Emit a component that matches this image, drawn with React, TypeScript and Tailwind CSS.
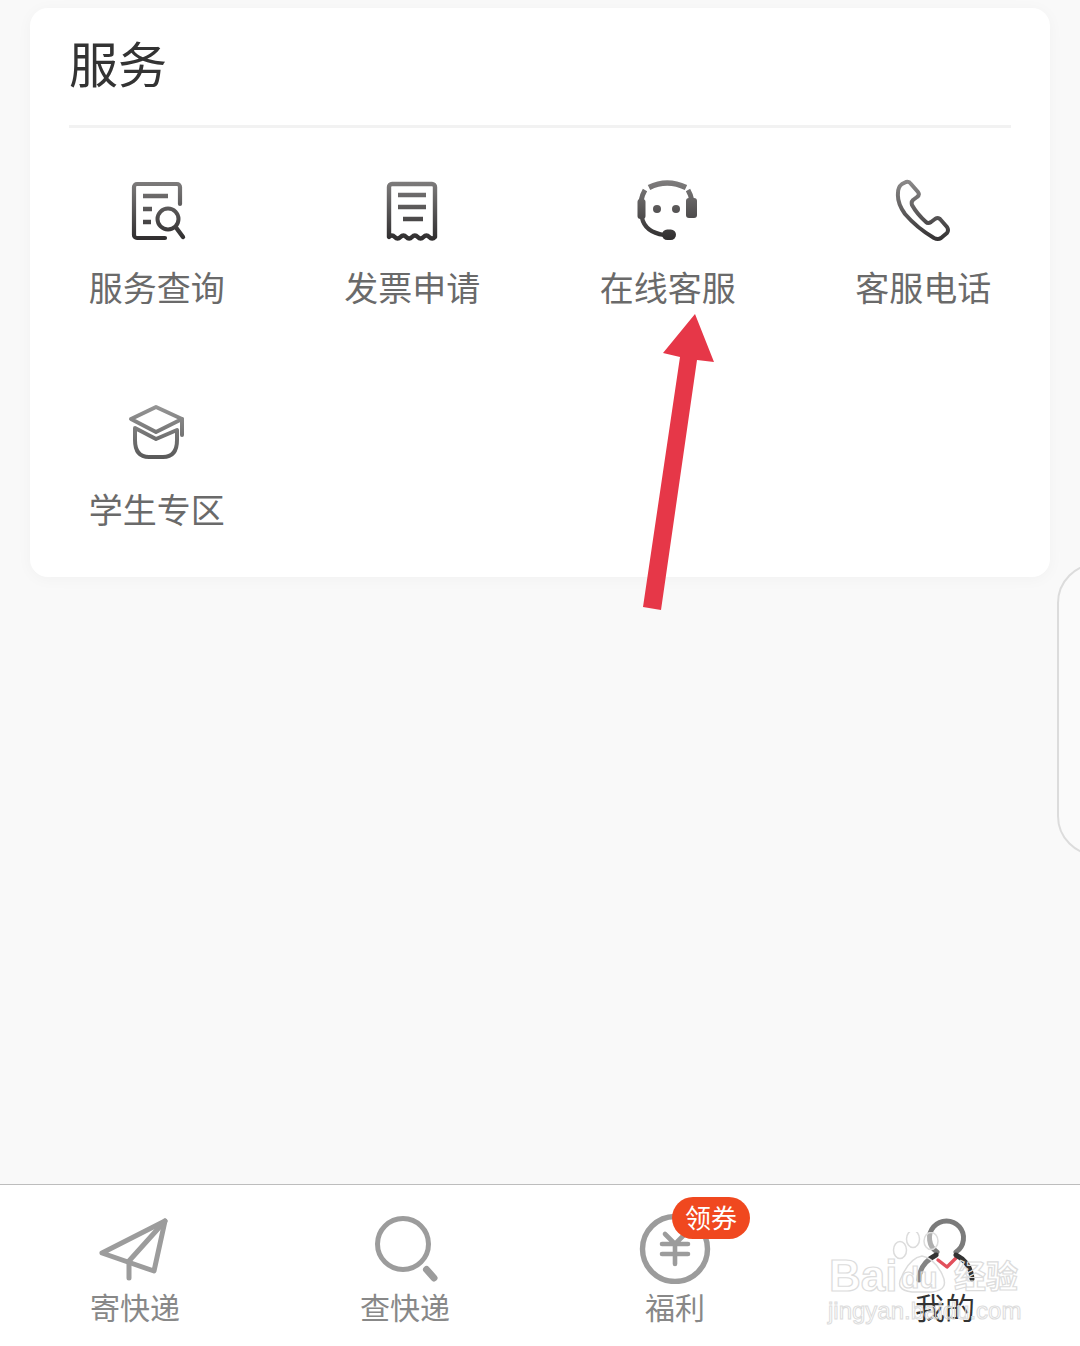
const font = "font-['Noto_Sans_CJK_SC','Noto_Sans',sans-serif]";

function Grad({ id, from = "#807e7e", to = "#2f2d2e" }: { id: string; from?: string; to?: string }) {
  return (
    <defs>
      <linearGradient id={id} gradientUnits="userSpaceOnUse" x1="0" y1="2" x2="0" y2="62">
        <stop offset="0" stopColor={from} />
        <stop offset="1" stopColor={to} />
      </linearGradient>
    </defs>
  );
}

function QueryIcon() {
  return (
    <svg width="64" height="64" viewBox="0 0 64 64" fill="none">
      <Grad id="g1" />
      <g stroke="url(#g1)" strokeLinecap="round" strokeLinejoin="round">
        <path d="M55 26V9a3 3 0 0 0-3-3H12a3 3 0 0 0-3 3v48a3 3 0 0 0 3 3h28" strokeWidth="4.2" />
        <circle cx="43" cy="41" r="10.5" strokeWidth="4" />
        <path d="M51 49.5L58 59" strokeWidth="4.4" />
        <path d="M18 18h25M18 31h9M18 44h8" strokeWidth="4.4" strokeLinecap="butt" />
      </g>
    </svg>
  );
}

function InvoiceIcon() {
  return (
    <svg width="64" height="64" viewBox="0 0 64 64" fill="none">
      <Grad id="g2" />
      <g stroke="url(#g2)" strokeLinejoin="round">
        <path
          d="M9 59V9a3 3 0 0 1 3-3h40a3 3 0 0 1 3 3v50q-2.9 3-5.75 0t-5.75 0-5.75 0-5.75 0-5.75 0-5.75 0-5.75 0-5.75 0z"
          strokeWidth="4.4"
        />
        <path d="M18 17h28M18 29h28M23 41h20" strokeWidth="4.4" />
      </g>
    </svg>
  );
}

function HeadsetIcon() {
  return (
    <svg width="64" height="64" viewBox="0 0 64 64" fill="none">
      <Grad id="g3" />
      <g stroke="url(#g3)" strokeLinecap="butt">
        <path d="M13 9.5Q31 0.5 50 9.5" strokeWidth="5.5" />
        <path d="M9 12Q6 17 5 23M52 12Q55 17 56 23" strokeWidth="5" />
        <path d="M6 40Q9 54 28 57" strokeWidth="4.2" />
      </g>
      <rect x="1.5" y="21" width="8" height="20" rx="3" fill="url(#g3)" />
      <rect x="50" y="20" width="11" height="20" rx="3" fill="url(#g3)" />
      <circle cx="21" cy="31" r="4" fill="url(#g3)" />
      <circle cx="40" cy="31" r="4" fill="url(#g3)" />
      <rect x="26" y="51.5" width="14" height="10.5" rx="5.2" fill="url(#g3)" />
    </svg>
  );
}

function PhoneIcon() {
  return (
    <svg width="64" height="64" viewBox="0 0 64 64" fill="none">
      <Grad id="g4" from="#8c8a8a" to="#343233" />
      <path
        d="M11 6L15 4Q18 3 20 6L27 14Q29 17 26 19L22 22Q20 24 21 27Q26 36 35 44Q37 46 40 44L44 41Q46 39 49 41L56 49Q58 52 56 55L50 60Q47 62 43 60Q26 50 14 36Q6 25 7 15Q7 9 11 6Z"
        stroke="url(#g4)"
        strokeWidth="4"
        strokeLinejoin="round"
      />
    </svg>
  );
}

function CapIcon() {
  return (
    <svg width="64" height="64" viewBox="0 0 64 64" fill="none">
      <Grad id="g5" from="#9a9a9a" to="#555" />
      <g stroke="url(#g5)" strokeWidth="4" strokeLinejoin="round" strokeLinecap="round">
        <path d="M31 7L57 19L31 32L6 19Z" />
        <path d="M57 19V35" />
        <path d="M10 28L31 39L52 30V40Q52 57 38 57H24Q10 57 10 40Z" />
      </g>
    </svg>
  );
}

function PlaneIcon() {
  return (
    <svg width="72" height="72" viewBox="0 0 72 72" fill="none" stroke="#9c9c9c" strokeWidth="5" strokeLinejoin="round" strokeLinecap="round">
      <path d="M66 9L3 41L55 59Z" />
      <path d="M66 9L30 49V66" />
    </svg>
  );
}

function SearchIcon() {
  return (
    <svg width="72" height="72" viewBox="0 0 72 72" fill="none" stroke="#9c9c9c" strokeLinecap="round">
      <circle cx="34" cy="32" r="25.5" strokeWidth="5" />
      <path d="M57.5 57.5L65 66" strokeWidth="7" />
    </svg>
  );
}

function YenIcon() {
  return (
    <svg width="72" height="72" viewBox="0 0 72 72" fill="none" stroke="#9c9c9c">
      <circle cx="36" cy="37" r="32.5" strokeWidth="5.4" />
      <path d="M26 22L36 32L46 22M23 32H49M23 42H49M36 32V52" strokeWidth="4.6" strokeLinecap="round" strokeLinejoin="round" />
    </svg>
  );
}

function UserIcon() {
  return (
    <svg width="72" height="72" viewBox="0 0 72 72" fill="none" strokeLinecap="round">
      <path d="M28 40A17 17 0 1 1 47 40" stroke="#7b7b7b" strokeWidth="5" />
      <path d="M29 48L38 55L47 46" stroke="#e2505c" strokeWidth="3.4" strokeLinejoin="round" />
      <path d="M10 68Q10 52 27 43M47 43Q62 51 63 67" stroke="#333" strokeWidth="5" />
    </svg>
  );
}

function Service({ icon, label }: { icon: React.ReactNode; label: string }) {
  return (
    <div className="flex flex-col items-center h-[222px]">
      {icon}
      <div className="mt-[25px] text-[34px] leading-[40px] text-[#6a6a6a]">{label}</div>
    </div>
  );
}

function Tab({ icon, label, active, badge }: { icon: React.ReactNode; label: string; active?: boolean; badge?: string }) {
  return (
    <div className="flex-1 flex flex-col items-center relative">
      <div className="relative">
        {icon}
        {badge && (
          <div className="absolute left-[33px] top-[-15px] w-[78px] h-[42px] rounded-full bg-[#f0481f] text-white text-[26px] leading-[40px] text-center">
            {badge}
          </div>
        )}
      </div>
      <div className={`mt-[2px] text-[30px] leading-[40px] ${active ? "text-[#333]" : "text-[#888]"}`}>{label}</div>
    </div>
  );
}

export default function App() {
  return (
    <div className={`relative w-[1080px] h-[1346px] overflow-hidden bg-[#f9f9f9] flex flex-col ${font}`}>
      <main className="flex-1 px-[30px] pt-2">
        <section className="bg-white rounded-[18px] h-[569px] shadow-[0_2px_16px_rgba(0,0,0,0.035)]">
          <div className="mx-[39px] h-[120px] border-b-[3px] border-[#f2f2f2] pt-[26px]">
            <h1 className="text-[49px] leading-[56px] text-[#333] font-normal">服务</h1>
          </div>
          <div className="-mx-px grid grid-cols-4 pt-[50px]">
            <Service icon={<QueryIcon />} label="服务查询" />
            <Service icon={<InvoiceIcon />} label="发票申请" />
            <Service icon={<HeadsetIcon />} label="在线客服" />
            <Service icon={<PhoneIcon />} label="客服电话" />
            <Service icon={<CapIcon />} label="学生专区" />
          </div>
        </section>
      </main>

      <nav className="h-[162px] bg-white border-t border-[#bdbdbd] pt-[27px] flex">
        <Tab icon={<PlaneIcon />} label="寄快递" />
        <Tab icon={<SearchIcon />} label="查快递" />
        <Tab icon={<YenIcon />} label="福利" badge="领券" />
        <Tab icon={<UserIcon />} label="我的" active />
      </nav>

      {/* Floating side panel */}
      <div className="absolute left-[1057px] top-[563px] w-[80px] h-[293px] rounded-[48px] border-2 border-[#dcdcdc] bg-[#fafafa]" />

      {/* Annotation arrow */}
      <svg className="absolute left-[640px] top-[312px]" width="76" height="300" viewBox="0 0 76 300">
        <polygon points="55,2 23,41 40,45 3,295 21,298 57,48 74,50" fill="#e63748" />
      </svg>

      {/* Baidu watermark */}
      <div className="absolute left-[826px] top-[1232px] w-[200px] h-[96px] font-['Liberation_Sans',sans-serif]">
        <svg className="absolute left-[62px] top-0" width="66" height="66" viewBox="0 0 66 66" fill="#fff" fillOpacity="0.4" stroke="#dcdcdc" strokeWidth="1.5">
          <ellipse cx="12" cy="18" rx="6.5" ry="8.5" />
          <ellipse cx="25" cy="7" rx="6.5" ry="8.5" />
          <ellipse cx="43" cy="9" rx="7" ry="8.5" />
          <path d="M34 24Q46 26 54 42Q62 58 44 60H24Q6 58 14 44Q22 26 34 24Z" />
        </svg>
        <span className="absolute left-[3px] top-[20px] text-[44px] leading-[48px] font-bold text-transparent [-webkit-text-stroke:1.2px_#dcdcdc]">Bai</span>
        <span className="absolute left-[75px] top-[31px] text-[30px] leading-[30px] font-bold text-transparent [-webkit-text-stroke:1.2px_#dcdcdc]">du</span>
        <span className={`absolute left-[128px] top-[23px] text-[32px] leading-[38px] font-bold text-transparent [-webkit-text-stroke:1.2px_#dcdcdc] ${font}`}>经验</span>
        <span className="absolute left-[2px] top-[65px] text-[24px] leading-[28px] text-transparent [-webkit-text-stroke:1px_#dcdcdc] whitespace-nowrap">jingyan.baidu.com</span>
      </div>
    </div>
  );
}
